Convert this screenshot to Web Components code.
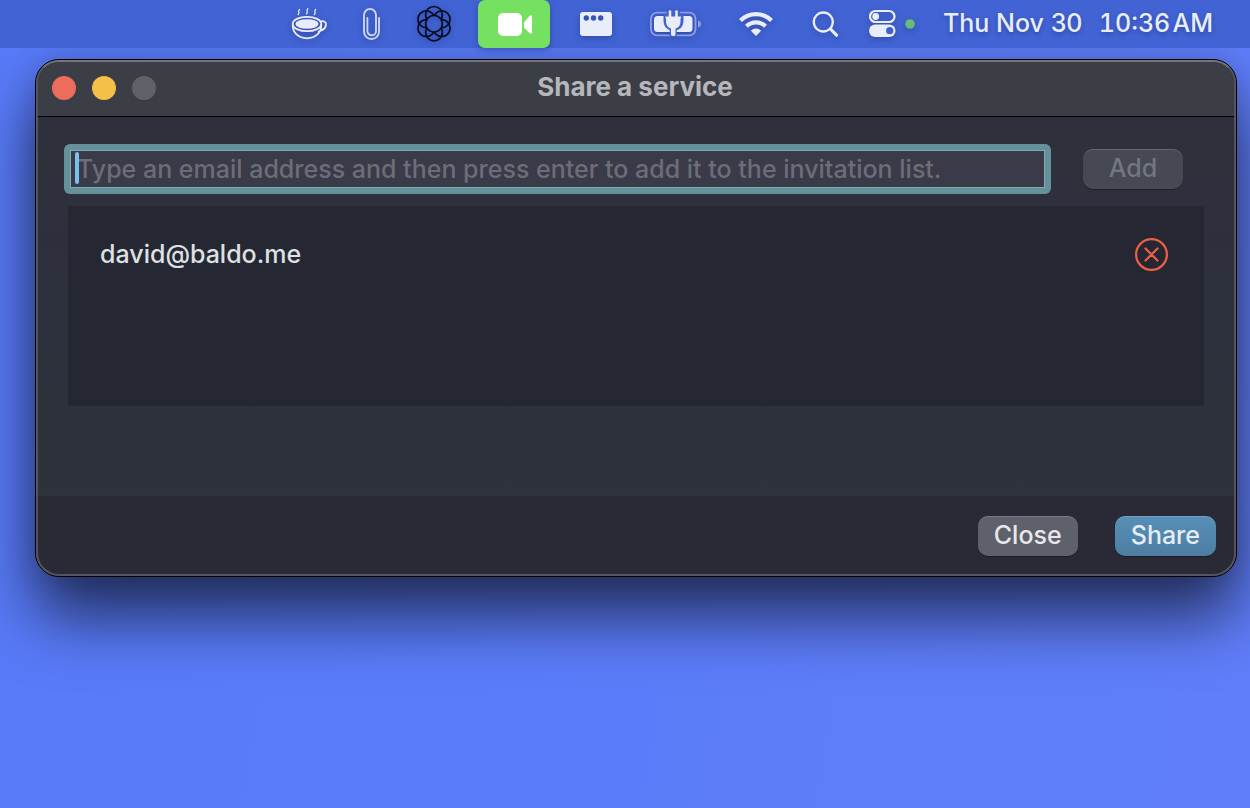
<!DOCTYPE html>
<html lang="en">
<head>
<meta charset="utf-8">
<title>Share a service</title>
<style>
html, body { margin: 0; min-height: 100vh; }
body { font-family: Inter, "Liberation Sans", sans-serif; font-weight: 500; background: linear-gradient(100deg, #587af8, #5a7cfa 40%, #607efa); background-attachment: fixed; }
</style>
</head>
<body>
<desk-top>
  <menu-bar slot="bar"></menu-bar>
  <app-window heading="Share a service">
    <invite-form></invite-form>
    <invite-list><invite-row>david@baldo.me</invite-row></invite-list>
    <push-button slot="actions">Close</push-button>
    <push-button slot="actions" kind="primary">Share</push-button>
  </app-window>
</desk-top>
<script>
function define(name, html) {
  customElements.define(name, class extends HTMLElement {
    constructor() {
      super();
      this.attachShadow({ mode: 'open' }).innerHTML = html;
    }
    connectedCallback() {
      const title = this.shadowRoot.querySelector('[data-heading]');
      if (title) title.textContent = this.getAttribute('heading');
      const button = this.shadowRoot.querySelector('button');
      if (button && this.hasAttribute('disabled')) button.disabled = true;
    }
  });
}

define('desk-top', `
<style>:host { display: flex; flex-direction: column; min-height: 100vh; overflow: hidden; }
main { display: block; padding: 11px 13px 0 35px; }
::slotted([slot=bar]) { position: relative; z-index: 1; }</style>
<slot name="bar"></slot><main><slot></slot></main>`);

define('menu-bar', `
<style>
:host { display: block; background: #4163d3; color: #e9edfa; }
nav { display: flex; justify-content: flex-end; align-items: center; gap: 20px; height: 48px; padding-right: 37px; }
svg { display: block; height: 48px; flex: none; filter: drop-shadow(0 2px 3px rgba(20,30,90,.35)); }
.clock { display: flex; gap: 16px; width: 270px; justify-content: space-between; font-size: 25px; line-height: 46px; height: 48px; white-space: nowrap; text-shadow: 0 2px 4px rgba(20,30,90,.35); }
.clock span:last-child { font-variant-numeric: tabular-nums; }
</style>
<nav aria-label="Menu bar">
<svg width="42" viewBox="289 0 42 48" fill="none" stroke="#e9edfa" stroke-width="1.800" stroke-linecap="round">
  <ellipse cx="307" cy="24" rx="14.3" ry="7.2"/><ellipse cx="307" cy="24" rx="11.6" ry="4.8" fill="#e9edfa" stroke="none"/>
  <path d="M292.7 25c0 7.5 5.5 13.3 14.3 13.3S321.300 32.500 321.300 25M320.500 21.500c3-1 6 .5 5.500 3.500-.6 3.500-3.500 5.500-7.500 6.500"/>
  <path stroke-width="1.300" d="M299.400 9.500c-2 2 .8 3-1.200 5M307.800 8.800c-2 2 .8 3-1.200 5M315.600 9.500c-2 2 .8 3-1.200 5"/>
</svg>
<svg width="41" viewBox="351 0 41 48" fill="none" stroke="#cbd5f5" stroke-width="1.900" stroke-linecap="round">
  <path d="M379 18v13.500a7.500 7.500 0 0 1-15 0V15a6 6 0 0 1 12 0v16a4.300 4.300 0 0 1-8.600 0V18"/>
</svg>
<svg width="44" viewBox="412 0 44 48" fill="none" stroke="#060b20" stroke-width="1.700">
  <defs><mask id="m" maskUnits="userSpaceOnUse" x="412" y="0" width="44" height="48"><path fill="#fff" stroke="none" d="M412 0h44v48h-44z"/><circle cx="434" cy="23.700" r="8.300" fill="#000" stroke="none"/></mask></defs>
  <circle cx="434" cy="23.700" r="8.300"/>
  <g mask="url(#m)"><circle cx="434" cy="14.900" r="8.400"/><circle cx="434" cy="32.500" r="8.400"/><circle cx="426.300" cy="19.300" r="8.400"/><circle cx="441.700" cy="19.300" r="8.400"/><circle cx="426.300" cy="28.100" r="8.400"/><circle cx="441.700" cy="28.100" r="8.400"/></g>
</svg>
<svg width="76" viewBox="476 0 76 48">
  <rect x="478" width="72" height="48" rx="7" fill="#76e061"/><rect x="498" y="13" width="24" height="23" rx="5" fill="#fff"/><path fill="#fff" d="M524 22.500 529.500 16q2.500-2 2.500 1v15q0 3-2.500 1L524 27.500z"/>
</svg>
<svg width="48" viewBox="572 0 48 48">
  <rect x="580" y="12" width="32" height="24" rx="3" fill="#e9edfa"/><g fill="#3455b8"><circle cx="586.300" cy="18" r="2.700"/><circle cx="593.500" cy="18" r="2.700"/><circle cx="600.700" cy="18" r="2.700"/></g>
</svg>
<svg width="71" viewBox="640 0 71 48">
  <rect x="651" y="12.700" width="44.500" height="22.600" rx="6" fill="none" stroke="#8c9fe0" stroke-width="1.800"/><path d="M698 20.500q3 1 3 3.500t-3 3.500z" fill="#8c9fe0"/>
  <rect x="654" y="16" width="38.500" height="16" rx="3.500" fill="#e9edfa"/>
  <path d="M670 10.500v6M676.500 10.500v6M673.200 27v9" stroke="#4163d3" stroke-width="7"/><path d="M665 15h17v6q0 6-6 8h-5q-6-2-6-8z" fill="#4163d3" stroke="#4163d3" stroke-width="3"/>
  <path d="M670 11.500v6M676.500 11.500v6" stroke="#e9edfa" stroke-width="2.600" stroke-linecap="round"/><path d="M665.500 16.500h15.500v1.800h-.5v3.200q0 5.500-5 7v6q0 1.500-2.200 1.500t-2.300-1.500v-6q-5-1.500-5-7v-3.200h-.5z" fill="#e9edfa"/>
</svg>
<svg width="50" viewBox="731 0 50 48" fill="none" stroke="#e9edfa" stroke-width="4.200">
  <path d="M740.500 20.500a22 22 0 0 1 31 0M746.500 26.200a13.500 13.500 0 0 1 19 0"/><path fill="#e9edfa" stroke="none" d="M756 36l-5.200-5.300q5.200-4.600 10.400 0z"/>
</svg>
<svg width="48" viewBox="801 0 48 48" fill="none" stroke="#e9edfa" stroke-linecap="round">
  <circle cx="823.300" cy="22" r="9.500" stroke-width="2.300"/><path d="m830.500 29 6 6.200" stroke-width="3.200"/>
</svg>
<svg width="54" viewBox="869 0 54 48">
  <rect x="870" y="11" width="24.500" height="11" rx="5.500" fill="none" stroke="#e9edfa" stroke-width="2.200"/><circle cx="875.700" cy="16.500" r="3.400" fill="#e9edfa"/>
  <rect x="869" y="24.500" width="26.500" height="12.500" rx="6.250" fill="#e9edfa"/><circle cx="889.700" cy="30.700" r="3.600" fill="#3e60cf"/><circle cx="910" cy="24" r="4.800" fill="#67bc77"/>
</svg>
<time class="clock"><span>Thu Nov 30</span><span>10:36&#8202;AM</span></time>
</nav>`);

define('app-window', `
<style>
:host { display: block; box-sizing: border-box; border: 1px solid #000; border-radius: 24px; box-shadow: 0 40px 64px rgba(0,0,0,.62), 0 0 30px rgba(0,0,0,.15); background: #292a36; }
.frame { border: 2px solid #54565f; border-top-color: #74767b; border-radius: 23px; overflow: hidden; }
header { box-sizing: border-box; display: grid; grid-template-columns: 1fr auto 1fr; align-items: center; height: 55px; padding: 0 16px 2px 14px; background: #3c3e46; border-bottom: 1px solid #000; }
.lights { display: flex; gap: 16px; }
.lights button { width: 24px; height: 24px; padding: 0; border: 0; border-radius: 50%; background: #5f626a; }
.lights .c { background: #ec6d5e; } .lights .m { background: #f4c048; }
h1 { margin: 0; font-size: 26px; line-height: 32px; font-weight: 700; color: #b5b7bb; padding-bottom: 2px; }
section { box-sizing: border-box; min-height: 379px; padding: 27px 30px 0 26px; background: linear-gradient(#2e303c, #2d323d); }
footer { display: flex; justify-content: flex-end; gap: 37px; padding: 20px 18px 18px; }
</style>
<div class="frame">
<header><div class="lights"><button class="c" aria-label="Close window"></button><button class="m" aria-label="Minimize"></button><button aria-label="Zoom"></button></div><h1 data-heading></h1><span></span></header>
<section><slot></slot></section>
<footer><slot name="actions"></slot></footer>
</div>`);

define('push-button', `
<style>
:host { display: block; --face: #5f616a; --ink: #e8e8ea; }
:host([kind=primary]) { --face: linear-gradient(#578fb8, #4d7ea2); --ink: #e4edf4; }
:host([disabled]) { --face: #464853; --ink: #747680; }
button { display: block; min-width: 100px; height: 40px; padding: 0 16px 2px; border: 0; border-radius: 10px; background: var(--face); color: var(--ink); font: inherit; font-size: 25px; line-height: 38px; box-shadow: inset 0 1px rgba(255,255,255,.16), 0 1px 1px rgba(0,0,0,.35); }
</style><button type="button"><slot></slot></button>`);

define('invite-form', `
<style>
:host { display: block; }
form { display: flex; align-items: center; gap: 32px; padding-right: 21px; }
.field { position: relative; flex: 1; display: block; padding: 6px; border-radius: 6px; background: #65919b; }
input { display: block; box-sizing: border-box; width: 100%; height: 38px; padding: 0 6px; border: 1px solid #83a9b2; border-radius: 0; outline: 0; background: #3a3a48; color: #dfe0e3; font: inherit; font-size: 25px; }
input::placeholder { color: #6c6e77; opacity: 1; }
.caret { position: absolute; left: 11px; top: 8px; width: 4px; height: 32px; border-radius: 2px; background: #77c1ec; }
</style>
<form><label class="field"><input type="email" aria-label="Email address" placeholder="Type an email address and then press enter to add it to the invitation list."><span class="caret"></span></label><push-button disabled>Add</push-button></form>`);

define('invite-list', `
<style>:host { display: block; box-sizing: border-box; min-height: 200px; margin: 12px 0 0 4px; padding: 32px 36px 0 32px; background: #252833; }</style><slot></slot>`);

define('invite-row', `
<style>
:host { display: flex; align-items: center; justify-content: space-between; color: #dfe0e3; font-size: 25px; line-height: 33px; }
button { display: block; width: 33px; height: 33px; padding: 0; border: 0; background: none; }
svg { display: block; }
</style><span><slot></slot></span><button type="button" aria-label="Remove"><svg width="33" height="33" viewBox="0 0 33 33" fill="none" stroke="#ee5f47" stroke-width="2.200" stroke-linecap="round"><circle cx="16.500" cy="16.500" r="15.400"/><path d="m10.500 10.500 12 12m0-12-12 12"/></svg></button>`);
</script>
</body>
</html>
